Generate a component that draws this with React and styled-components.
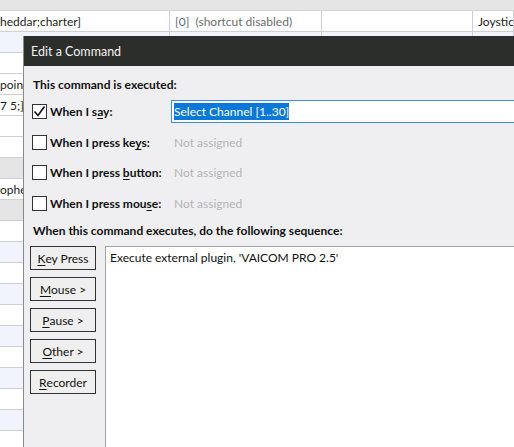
import React from 'react';
import styled, { createGlobalStyle } from 'styled-components';

const Global = createGlobalStyle`
  html, body {
    margin: 0;
    padding: 0;
    width: 514px;
    height: 447px;
    overflow: hidden;
    background: #ffffff;
    font-family: Lato, "Noto Sans", sans-serif;
    font-size: 12px;
  }
`;

const Page = styled.div`
  position: relative;
  width: 514px;
  height: 447px;
  overflow: hidden;
`;

const HeaderStrip = styled.div`
  height: 11px;
  background: #e5e5e5;
  border-bottom: 1px solid #d2d2da;
  box-sizing: border-box;
`;

const Row = styled.div`
  display: grid;
  grid-template-columns: 170px 152px 151px 1fr;
  height: 21px;
  box-sizing: border-box;
  border-bottom: 1px solid #cfcfd9;
  background: ${(p) => (p.$tone === 'blue' ? '#f1f3fd' : p.$tone === 'gray' ? '#e5e5e5' : '#ffffff')};
`;

const Cell = styled.div`
  display: flex;
  align-items: center;
  padding-left: ${(p) => (p.$first ? '0' : '5px')};
  border-right: 1px solid #cfcfd9;
  color: ${(p) => (p.$muted ? '#6d6d6d' : '#1b1b1b')};
  white-space: pre;
  overflow: hidden;
`;

const Dialog = styled.div`
  position: absolute;
  left: 23px;
  top: 36px;
  width: 520px;
  height: 430px;
  background: #efeff2;
  border-left: 1px solid #8a8a8a;
  display: flex;
  flex-direction: column;
`;

const TitleBar = styled.div`
  height: 30px;
  background: #2c2e2b;
  color: #f2f2f2;
  display: flex;
  align-items: center;
  padding-left: 7px;
  flex-shrink: 0;
  font-size: 12.5px;
`;

const Body = styled.div`
  display: flex;
  flex-direction: column;
  padding: 11px 0 0 8px;
`;

const Heading = styled.div`
  font-weight: 700;
  color: #111;
  height: 16px;
  line-height: 16px;
  padding-left: 1px;
  white-space: nowrap;
`;

const TriggerList = styled.div`
  display: flex;
  flex-direction: column;
  gap: 7.7px;
  margin-top: 7px;
`;

const TriggerRow = styled.div`
  display: flex;
  align-items: center;
  height: 23px;
`;

const Box = styled.div`
  width: 15px;
  height: 15px;
  box-sizing: border-box;
  border: 1px solid #333;
  background: #fff;
  display: flex;
  align-items: center;
  justify-content: center;
  flex-shrink: 0;
`;

const Label = styled.div`
  font-weight: 700;
  color: #111;
  margin-left: 3px;
  width: 121px;
  flex-shrink: 0;
  white-space: nowrap;
`;

const Hint = styled.div`
  color: #b4b4b4;
  margin-left: 3px;
`;

const Field = styled.div`
  flex: 1;
  height: 23px;
  box-sizing: border-box;
  border: 1px solid #3c8ee6;
  background: #fff;
  display: flex;
  align-items: center;
  padding-left: 2px;
`;

const Selected = styled.span`
  background: #0a78d7;
  color: #fff;
  line-height: 17px;
`;

const SeqHeading = styled(Heading)`
  margin-top: 8px;
`;

const SeqArea = styled.div`
  display: flex;
  gap: 9px;
  margin-top: 7px;
  margin-left: -2px;
`;

const ButtonColumn = styled.div`
  display: flex;
  flex-direction: column;
  gap: 7px;
`;

const Button = styled.div`
  width: 66px;
  height: 24px;
  box-sizing: border-box;
  border: 1px solid #333;
  background: #efefef;
  display: flex;
  align-items: center;
  justify-content: center;
  color: #111;
`;

const U = styled.span`
  text-decoration: underline;
  text-underline-offset: 2px;
`;

const ListBox = styled.div`
  flex: 1;
  height: 220px;
  box-sizing: border-box;
  border: 1px solid #a3a3a3;
  border-right: none;
  background: #fff;
  padding: 3px 4px;
  color: #111;
`;

const rows = [
  { tone: 'white', cells: ['heddar;charter]', '[0]  (shortcut disabled)', '', 'Joystick'] },
  { tone: 'blue', cells: ['', '', '', ''] },
  { tone: 'white', cells: ['', '', '', ''] },
  { tone: 'white', cells: ['pointer', '', '', ''] },
  { tone: 'white', cells: ['7 5;]', '', '', ''] },
  { tone: 'white', cells: ['', '', '', ''] },
  { tone: 'white', cells: ['', '', '', ''] },
  { tone: 'gray', cells: ['', '', '', ''] },
  { tone: 'white', cells: ['ophers', '', '', ''] },
  { tone: 'gray', cells: ['', '', '', ''] },
];
for (let i = 0; i < 10; i++) {
  rows.push({ tone: i % 2 === 0 ? 'white' : 'blue', cells: ['', '', '', ''] });
}

const Check = () => (
  <svg width="13" height="13" viewBox="0 0 13 13">
    <path d="M1.5 6.5 L5 10.5 L11.5 1.5" fill="none" stroke="#111" strokeWidth="1.6" />
  </svg>
);

const triggers = [
  { pre: 'When I s', u: 'a', post: 'y:' },
  { pre: 'When I press ke', u: 'y', post: 's:' },
  { pre: 'When I press ', u: 'b', post: 'utton:' },
  { pre: 'When I press mou', u: 's', post: 'e:' },
];

const buttons = [
  ['K', 'ey Press'],
  ['M', 'ouse >'],
  ['P', 'ause >'],
  ['O', 'ther >'],
  ['R', 'ecorder'],
];

export default function App() {
  return (
    <Page>
      <Global />
      <HeaderStrip />
      {rows.map((r, i) => (
        <Row key={i} $tone={r.tone}>
          {r.cells.map((c, j) => (
            <Cell key={j} $first={j === 0} $muted={j === 1}>{c}</Cell>
          ))}
        </Row>
      ))}
      <Dialog>
        <TitleBar>Edit a Command</TitleBar>
        <Body>
          <Heading>This command is executed:</Heading>
          <TriggerList>
            {triggers.map((t, i) => (
              <TriggerRow key={i}>
                <Box>{i === 0 && <Check />}</Box>
                <Label>
                  {t.pre}<U>{t.u}</U>{t.post}
                </Label>
                {i === 0 ? (
                  <Field><Selected>Select Channel [1..30]</Selected></Field>
                ) : (
                  <Hint>Not assigned</Hint>
                )}
              </TriggerRow>
            ))}
          </TriggerList>
          <SeqHeading>When this command executes, do the following sequence:</SeqHeading>
          <SeqArea>
            <ButtonColumn>
              {buttons.map(([u, rest]) => (
                <Button key={u}><U>{u}</U>{rest}</Button>
              ))}
            </ButtonColumn>
            <ListBox>Execute external plugin, 'VAICOM PRO 2.5'</ListBox>
          </SeqArea>
        </Body>
      </Dialog>
    </Page>
  );
}
